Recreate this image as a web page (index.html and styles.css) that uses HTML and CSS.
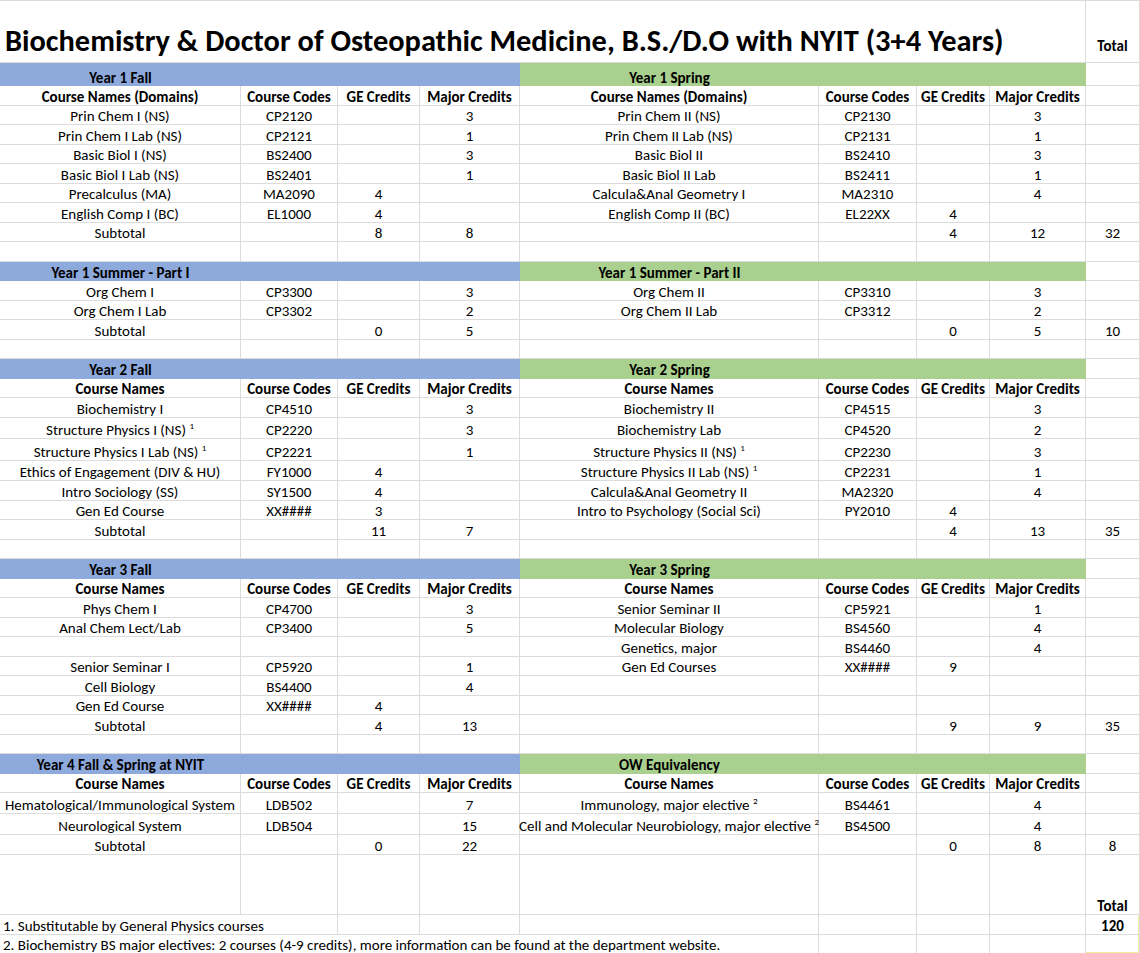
FILE: index.html
```html
<!DOCTYPE html>
<html>
<head>
<meta charset="utf-8">
<title>Biochemistry &amp; Doctor of Osteopathic Medicine</title>
<link rel="stylesheet" href="styles.css">
</head>
<body>
<div class="sheet">
  <div class="row title">
    <div class="cell span8 title-text">Biochemistry &amp; Doctor of Osteopathic Medicine, B.S./D.O with NYIT (3+4 Years)</div>
    <div class="cell b total-head">Total</div>
  </div>

  <div class="row first">
    <div class="band blue"><span>Year 1 Fall</span></div>
    <div class="band green"><span>Year 1 Spring</span></div>
    <div class="cell"></div>
  </div>
  <div class="row b">
    <div class="cell">Course Names (Domains)</div><div class="cell">Course Codes</div><div class="cell">GE Credits</div><div class="cell">Major Credits</div>
    <div class="cell">Course Names (Domains)</div><div class="cell">Course Codes</div><div class="cell">GE Credits</div><div class="cell">Major Credits</div><div class="cell"></div>
  </div>
  <div class="row">
    <div class="cell">Prin Chem I (NS)</div><div class="cell">CP2120</div><div class="cell"></div><div class="cell">3</div>
    <div class="cell">Prin Chem II (NS)</div><div class="cell">CP2130</div><div class="cell"></div><div class="cell">3</div><div class="cell"></div>
  </div>
  <div class="row">
    <div class="cell">Prin Chem I Lab (NS)</div><div class="cell">CP2121</div><div class="cell"></div><div class="cell">1</div>
    <div class="cell">Prin Chem II Lab (NS)</div><div class="cell">CP2131</div><div class="cell"></div><div class="cell">1</div><div class="cell"></div>
  </div>
  <div class="row">
    <div class="cell">Basic Biol I (NS)</div><div class="cell">BS2400</div><div class="cell"></div><div class="cell">3</div>
    <div class="cell">Basic Biol II</div><div class="cell">BS2410</div><div class="cell"></div><div class="cell">3</div><div class="cell"></div>
  </div>
  <div class="row">
    <div class="cell">Basic Biol I Lab (NS)</div><div class="cell">BS2401</div><div class="cell"></div><div class="cell">1</div>
    <div class="cell">Basic Biol II Lab</div><div class="cell">BS2411</div><div class="cell"></div><div class="cell">1</div><div class="cell"></div>
  </div>
  <div class="row">
    <div class="cell">Precalculus (MA)</div><div class="cell">MA2090</div><div class="cell">4</div><div class="cell"></div>
    <div class="cell">Calcula&amp;Anal Geometry I</div><div class="cell">MA2310</div><div class="cell"></div><div class="cell">4</div><div class="cell"></div>
  </div>
  <div class="row">
    <div class="cell">English Comp I (BC)</div><div class="cell">EL1000</div><div class="cell">4</div><div class="cell"></div>
    <div class="cell">English Comp II (BC)</div><div class="cell">EL22XX</div><div class="cell">4</div><div class="cell"></div><div class="cell"></div>
  </div>
  <div class="row">
    <div class="cell">Subtotal</div><div class="cell"></div><div class="cell">8</div><div class="cell">8</div>
    <div class="cell"></div><div class="cell"></div><div class="cell">4</div><div class="cell">12</div><div class="cell">32</div>
  </div>
  <div class="row">
    <div class="cell"></div><div class="cell"></div><div class="cell"></div><div class="cell"></div>
    <div class="cell"></div><div class="cell"></div><div class="cell"></div><div class="cell"></div><div class="cell"></div>
  </div>

  <div class="row">
    <div class="band blue"><span>Year 1 Summer - Part I</span></div>
    <div class="band green"><span>Year 1 Summer - Part II</span></div>
    <div class="cell"></div>
  </div>
  <div class="row">
    <div class="cell">Org Chem I</div><div class="cell">CP3300</div><div class="cell"></div><div class="cell">3</div>
    <div class="cell">Org Chem II</div><div class="cell">CP3310</div><div class="cell"></div><div class="cell">3</div><div class="cell"></div>
  </div>
  <div class="row">
    <div class="cell">Org Chem I Lab</div><div class="cell">CP3302</div><div class="cell"></div><div class="cell">2</div>
    <div class="cell">Org Chem II Lab</div><div class="cell">CP3312</div><div class="cell"></div><div class="cell">2</div><div class="cell"></div>
  </div>
  <div class="row">
    <div class="cell">Subtotal</div><div class="cell"></div><div class="cell">0</div><div class="cell">5</div>
    <div class="cell"></div><div class="cell"></div><div class="cell">0</div><div class="cell">5</div><div class="cell">10</div>
  </div>
  <div class="row">
    <div class="cell"></div><div class="cell"></div><div class="cell"></div><div class="cell"></div>
    <div class="cell"></div><div class="cell"></div><div class="cell"></div><div class="cell"></div><div class="cell"></div>
  </div>

  <div class="row">
    <div class="band blue"><span>Year 2 Fall</span></div>
    <div class="band green"><span>Year 2 Spring</span></div>
    <div class="cell"></div>
  </div>
  <div class="row b">
    <div class="cell">Course Names</div><div class="cell">Course Codes</div><div class="cell">GE Credits</div><div class="cell">Major Credits</div>
    <div class="cell">Course Names</div><div class="cell">Course Codes</div><div class="cell">GE Credits</div><div class="cell">Major Credits</div><div class="cell"></div>
  </div>
  <div class="row">
    <div class="cell">Biochemistry I</div><div class="cell">CP4510</div><div class="cell"></div><div class="cell">3</div>
    <div class="cell">Biochemistry II</div><div class="cell">CP4515</div><div class="cell"></div><div class="cell">3</div><div class="cell"></div>
  </div>
  <div class="row tall">
    <div class="cell"><span>Structure Physics I (NS) <sup>1</sup></span></div><div class="cell">CP2220</div><div class="cell"></div><div class="cell">3</div>
    <div class="cell">Biochemistry Lab</div><div class="cell">CP4520</div><div class="cell"></div><div class="cell">2</div><div class="cell"></div>
  </div>
  <div class="row tall">
    <div class="cell"><span>Structure Physics I Lab (NS) <sup>1</sup></span></div><div class="cell">CP2221</div><div class="cell"></div><div class="cell">1</div>
    <div class="cell"><span>Structure Physics II (NS) <sup>1</sup></span></div><div class="cell">CP2230</div><div class="cell"></div><div class="cell">3</div><div class="cell"></div>
  </div>
  <div class="row mid">
    <div class="cell">Ethics of Engagement (DIV &amp; HU)</div><div class="cell">FY1000</div><div class="cell">4</div><div class="cell"></div>
    <div class="cell"><span>Structure Physics II Lab (NS) <sup>1</sup></span></div><div class="cell">CP2231</div><div class="cell"></div><div class="cell">1</div><div class="cell"></div>
  </div>
  <div class="row">
    <div class="cell">Intro Sociology (SS)</div><div class="cell">SY1500</div><div class="cell">4</div><div class="cell"></div>
    <div class="cell">Calcula&amp;Anal Geometry II</div><div class="cell">MA2320</div><div class="cell"></div><div class="cell">4</div><div class="cell"></div>
  </div>
  <div class="row">
    <div class="cell">Gen Ed Course</div><div class="cell">XX####</div><div class="cell">3</div><div class="cell"></div>
    <div class="cell">Intro to Psychology (Social Sci)</div><div class="cell">PY2010</div><div class="cell">4</div><div class="cell"></div><div class="cell"></div>
  </div>
  <div class="row">
    <div class="cell">Subtotal</div><div class="cell"></div><div class="cell">11</div><div class="cell">7</div>
    <div class="cell"></div><div class="cell"></div><div class="cell">4</div><div class="cell">13</div><div class="cell">35</div>
  </div>
  <div class="row">
    <div class="cell"></div><div class="cell"></div><div class="cell"></div><div class="cell"></div>
    <div class="cell"></div><div class="cell"></div><div class="cell"></div><div class="cell"></div><div class="cell"></div>
  </div>

  <div class="row">
    <div class="band blue"><span>Year 3 Fall</span></div>
    <div class="band green"><span>Year 3 Spring</span></div>
    <div class="cell"></div>
  </div>
  <div class="row b">
    <div class="cell">Course Names</div><div class="cell">Course Codes</div><div class="cell">GE Credits</div><div class="cell">Major Credits</div>
    <div class="cell">Course Names</div><div class="cell">Course Codes</div><div class="cell">GE Credits</div><div class="cell">Major Credits</div><div class="cell"></div>
  </div>
  <div class="row">
    <div class="cell">Phys Chem I</div><div class="cell">CP4700</div><div class="cell"></div><div class="cell">3</div>
    <div class="cell">Senior Seminar II</div><div class="cell">CP5921</div><div class="cell"></div><div class="cell">1</div><div class="cell"></div>
  </div>
  <div class="row">
    <div class="cell">Anal Chem Lect/Lab</div><div class="cell">CP3400</div><div class="cell"></div><div class="cell">5</div>
    <div class="cell">Molecular Biology</div><div class="cell">BS4560</div><div class="cell"></div><div class="cell">4</div><div class="cell"></div>
  </div>
  <div class="row">
    <div class="cell"></div><div class="cell"></div><div class="cell"></div><div class="cell"></div>
    <div class="cell">Genetics, major</div><div class="cell">BS4460</div><div class="cell"></div><div class="cell">4</div><div class="cell"></div>
  </div>
  <div class="row">
    <div class="cell">Senior Seminar I</div><div class="cell">CP5920</div><div class="cell"></div><div class="cell">1</div>
    <div class="cell">Gen Ed Courses</div><div class="cell">XX####</div><div class="cell">9</div><div class="cell"></div><div class="cell"></div>
  </div>
  <div class="row">
    <div class="cell">Cell Biology</div><div class="cell">BS4400</div><div class="cell"></div><div class="cell">4</div>
    <div class="cell"></div><div class="cell"></div><div class="cell"></div><div class="cell"></div><div class="cell"></div>
  </div>
  <div class="row">
    <div class="cell">Gen Ed Course</div><div class="cell">XX####</div><div class="cell">4</div><div class="cell"></div>
    <div class="cell"></div><div class="cell"></div><div class="cell"></div><div class="cell"></div><div class="cell"></div>
  </div>
  <div class="row">
    <div class="cell">Subtotal</div><div class="cell"></div><div class="cell">4</div><div class="cell">13</div>
    <div class="cell"></div><div class="cell"></div><div class="cell">9</div><div class="cell">9</div><div class="cell">35</div>
  </div>
  <div class="row">
    <div class="cell"></div><div class="cell"></div><div class="cell"></div><div class="cell"></div>
    <div class="cell"></div><div class="cell"></div><div class="cell"></div><div class="cell"></div><div class="cell"></div>
  </div>

  <div class="row">
    <div class="band blue"><span>Year 4 Fall &amp; Spring at NYIT</span></div>
    <div class="band green"><span>OW Equivalency</span></div>
    <div class="cell"></div>
  </div>
  <div class="row b">
    <div class="cell">Course Names</div><div class="cell">Course Codes</div><div class="cell">GE Credits</div><div class="cell">Major Credits</div>
    <div class="cell">Course Names</div><div class="cell">Course Codes</div><div class="cell">GE Credits</div><div class="cell">Major Credits</div><div class="cell"></div>
  </div>
  <div class="row semi">
    <div class="cell">Hematological/Immunological System</div><div class="cell">LDB502</div><div class="cell"></div><div class="cell">7</div>
    <div class="cell"><span>Immunology, major elective <sup>2</sup></span></div><div class="cell">BS4461</div><div class="cell"></div><div class="cell">4</div><div class="cell"></div>
  </div>
  <div class="row semi">
    <div class="cell">Neurological System</div><div class="cell">LDB504</div><div class="cell"></div><div class="cell">15</div>
    <div class="cell"><span>Cell and Molecular Neurobiology, major elective <sup>2</sup></span></div><div class="cell">BS4500</div><div class="cell"></div><div class="cell">4</div><div class="cell"></div>
  </div>
  <div class="row">
    <div class="cell">Subtotal</div><div class="cell"></div><div class="cell">0</div><div class="cell">22</div>
    <div class="cell"></div><div class="cell"></div><div class="cell">0</div><div class="cell">8</div><div class="cell">8</div>
  </div>
  <div class="row big">
    <div class="cell"></div><div class="cell"></div><div class="cell"></div><div class="cell"></div>
    <div class="cell"></div><div class="cell"></div><div class="cell"></div><div class="cell"></div><div class="cell b">Total</div>
  </div>
  <div class="row">
    <div class="cell note span2">1. Substitutable by General Physics courses</div><div class="cell"></div><div class="cell"></div>
    <div class="cell"></div><div class="cell"></div><div class="cell"></div><div class="cell"></div><div class="cell b hl">120</div>
  </div>
  <div class="row">
    <div class="cell note span5">2. Biochemistry BS major electives: 2 courses (4-9 credits), more information can be found at the department website.</div>
    <div class="cell"></div><div class="cell"></div><div class="cell"></div><div class="cell hl hl-bottom"></div>
  </div>
</div>
</body>
</html>
```

FILE: styles.css
```css
* {
  box-sizing: border-box;
}

html, body {
  margin: 0;
  padding: 0;
  background: #ffffff;
}

body {
  font-family: "Carlito", "Lato", "Liberation Sans", sans-serif;
  font-size: 15px;
  color: #000000;
  width: 1140px;
  height: 953px;
  overflow: hidden;
}

.sheet {
  width: 1140px;
}

.row {
  display: grid;
  grid-template-columns: 241px 97px 82px 100px 299px 98px 73px 96px 54px;
  height: 19.5px;
}

.row.first { height: 23px; }
.row.tall { height: 21.5px; }
.row.mid { height: 20.5px; }
.row.semi { height: 21px; }
.row.big { height: 60.5px; }
.row.title { height: 63px; }

.b { font-weight: 700; }

.cell {
  border-right: 1px solid #dcdcdc;
  border-bottom: 1px solid #dcdcdc;
  display: flex;
  align-items: flex-end;
  justify-content: center;
  padding-bottom: 0;
  line-height: 16px;
  white-space: nowrap;
  min-width: 0;
}

.span2 { grid-column: span 2; }
.span5 { grid-column: span 5; }
.span8 { grid-column: span 8; }

.title .cell {
  border-top: 1px solid #dcdcdc;
}

.title-text {
  justify-content: flex-start;
  padding-left: 5px;
  padding-bottom: 3px;
  font-size: 30.4px;
  font-weight: 700;
  line-height: 36px;
}

.total-head {
  padding-bottom: 8px;
}

.band {
  grid-column: span 4;
  display: flex;
  align-items: flex-end;
  padding-bottom: 0.5px;
  font-weight: 700;
  line-height: 16px;
  white-space: nowrap;
}

.band.blue { background: #8ea9db; }
.band.green { background: #a9d08e; }

.band.blue span { width: 241px; text-align: center; }
.band.green span { width: 299px; text-align: center; }

.note {
  justify-content: flex-start;
  padding-left: 3px;
}

sup {
  font-size: 9px;
  line-height: 0;
  vertical-align: 6px;
}

.hl {
  box-shadow: inset -1px 0 0 #f3ec9a;
}

.hl-bottom {
  box-shadow: inset -1px -1px 0 #f3ec9a;
}
```
